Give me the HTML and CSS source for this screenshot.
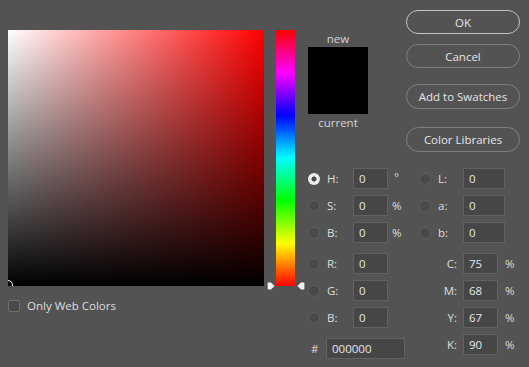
FILE: index.html
```html
<!DOCTYPE html>
<html>
<head>
<meta charset="utf-8">
<link rel="stylesheet" href="styles.css">
</head>
<body>
<div class="dialog">
  <div class="picker">
    <div class="field"><span class="marker"></span></div>
    <div class="webcolors"><span class="checkbox"></span><span>Only Web Colors</span></div>
  </div>
  <div class="hue">
    <svg class="arrow arrow-l" width="8" height="8" viewBox="0 0 8 8"><path d="M1.2 0.6 H4 L7.6 4 L4 7.4 H1.2 Q0.6 7.4 0.6 6.8 V1.2 Q0.6 0.6 1.2 0.6 Z" fill="#f2f2f2"/></svg>
    <svg class="arrow arrow-r" width="8" height="8" viewBox="0 0 8 8"><path d="M6.8 0.6 H4 L0.4 4 L4 7.4 H6.8 Q7.4 7.4 7.4 6.8 V1.2 Q7.4 0.6 6.8 0.6 Z" fill="#f2f2f2"/></svg>
  </div>
  <div class="panel">
    <div class="top">
      <div class="preview">
        <div class="cap">new</div>
        <div class="swatch"></div>
        <div class="cap">current</div>
      </div>
      <div class="buttons">
        <div class="btn btn-ok">OK</div>
        <div class="btn btn-cancel">Cancel</div>
        <div class="btn btn-add">Add to Swatches</div>
        <div class="btn btn-lib">Color Libraries</div>
      </div>
    </div>
    <div class="fields">
      <div class="col col-left">
        <div class="row"><span class="radio on"></span><span class="lbl">H:</span><span class="inp">0</span><span class="unit deg">°</span></div>
        <div class="row"><span class="radio"></span><span class="lbl">S:</span><span class="inp">0</span><span class="unit">%</span></div>
        <div class="row"><span class="radio"></span><span class="lbl">B:</span><span class="inp">0</span><span class="unit">%</span></div>
        <div class="row grp"><span class="radio"></span><span class="lbl">R:</span><span class="inp">0</span></div>
        <div class="row"><span class="radio"></span><span class="lbl">G:</span><span class="inp">0</span></div>
        <div class="row"><span class="radio"></span><span class="lbl">B:</span><span class="inp">0</span></div>
        <div class="row grp"><span class="hash">#</span><span class="inp hex">000000</span></div>
      </div>
      <div class="col col-right">
        <div class="row"><span class="radio"></span><span class="lbl lab">L:</span><span class="inp wide">0</span></div>
        <div class="row"><span class="radio"></span><span class="lbl lab">a:</span><span class="inp wide">0</span></div>
        <div class="row"><span class="radio"></span><span class="lbl lab">b:</span><span class="inp wide">0</span></div>
        <div class="row grp"><span class="spacer"></span><span class="lbl cmyk">C:</span><span class="inp">75</span><span class="unit pct">%</span></div>
        <div class="row"><span class="spacer"></span><span class="lbl cmyk">M:</span><span class="inp">68</span><span class="unit pct">%</span></div>
        <div class="row"><span class="spacer"></span><span class="lbl cmyk">Y:</span><span class="inp">67</span><span class="unit pct">%</span></div>
        <div class="row"><span class="spacer"></span><span class="lbl cmyk">K:</span><span class="inp">90</span><span class="unit pct">%</span></div>
      </div>
    </div>
  </div>
</div>
</body>
</html>
```
FILE: styles.css
```css
html, body {
  margin: 0;
  padding: 0;
  background: #535353;
}
body {
  width: 529px;
  height: 367px;
  overflow: hidden;
  font-family: "Open Sans", "Noto Sans", sans-serif;
  font-size: 11.5px;
  color: #dedede;
}
.dialog {
  display: flex;
  padding: 10px 0 0 8px;
  box-sizing: border-box;
  height: 367px;
}
.picker {
  margin-top: 20px;
  width: 256px;
}
.field {
  position: relative;
  width: 256px;
  height: 256px;
  overflow: hidden;
  background:
    linear-gradient(to top, #000 0%, rgba(0,0,0,0) 100%),
    linear-gradient(to right, #fff 0%, #f00 100%);
}
.marker {
  position: absolute;
  left: -5px;
  top: 250px;
  width: 10px;
  height: 10px;
  box-sizing: border-box;
  border: 1.3px solid #fff;
  border-radius: 50%;
}
.webcolors {
  display: flex;
  align-items: center;
  gap: 7px;
  margin-top: 14px;
  height: 12px;
  line-height: 12px;
}
.checkbox {
  width: 12px;
  height: 12px;
  box-sizing: border-box;
  border: 1px solid #6f6f6f;
  border-radius: 2px;
  background: #4a4a4a;
}
.hue {
  position: relative;
  margin-left: 12px;
  margin-top: 20px;
  width: 19px;
  height: 256px;
  background: linear-gradient(to bottom, #f00 0%, #f0f 16.67%, #00f 33.33%, #0ff 50%, #0f0 66.67%, #ff0 83.33%, #f00 100%);
}
.arrow {
  position: absolute;
  top: 252px;
}
.arrow-l { left: -9px; }
.arrow-r { left: 21px; }
.panel {
  margin-left: 13px;
  width: 221px;
}
.top {
  display: flex;
  height: 158px;
}
.preview {
  width: 60px;
  padding-top: 21px;
}
.cap {
  text-align: center;
  line-height: 15px;
  height: 15px;
  color: #d4d4d4;
}
.swatch {
  margin: 1px 0 1px;
  height: 67px;
  background: #000;
}
.buttons {
  margin-left: 38px;
  width: 114px;
  display: flex;
  flex-direction: column;
}
.btn {
  box-sizing: border-box;
  border: 1px solid #808080;
  border-radius: 13px;
  text-align: center;
  color: #e6e6e6;
  display: flex;
  align-items: center;
  justify-content: center;
}
.btn-ok {
  height: 24px;
  border: 1.6px solid #c4c4c4;
}
.btn-cancel {
  height: 24px;
  margin-top: 10px;
}
.btn-add {
  height: 25px;
  margin-top: 16px;
}
.btn-lib {
  height: 25px;
  margin-top: 18px;
}
.fields {
  display: flex;
}
.col-left { width: 111px; }
.col-right { flex: 1; }
.row {
  display: flex;
  align-items: center;
  height: 21px;
  margin-bottom: 6px;
}
.row.grp { margin-top: 10px; }
.radio {
  width: 12px;
  height: 12px;
  box-sizing: border-box;
  border-radius: 50%;
  background: #494949;
  border: 1px solid #5f5f5f;
  flex: none;
}
.radio.on {
  background: radial-gradient(circle, #4a4a4a 0 2.3px, #ececec 2.8px);
  border: none;
}
.spacer { width: 12px; flex: none; }
.lbl {
  width: 26px;
  margin-left: 7px;
  flex: none;
}
.lbl.lab {
  width: 25px;
}
.lbl.cmyk {
  margin-left: 0;
  width: 26px;
  text-align: right;
  padding-right: 6px;
}
.inp {
  box-sizing: border-box;
  width: 35px;
  height: 21px;
  line-height: 19px;
  padding-left: 5px;
  background: #464646;
  border: 1px solid #616161;
  color: #e6e6e6;
  flex: none;
}
.inp.wide { width: 42px; }
.inp.hex { width: 79px; }
.unit { padding-left: 4px; }
.unit.deg { padding-left: 6px; margin-top: -4px; }
.unit.pct { padding-left: 7px; }
.hash {
  width: 15px;
  padding-left: 3px;
  flex: none;
}
```
